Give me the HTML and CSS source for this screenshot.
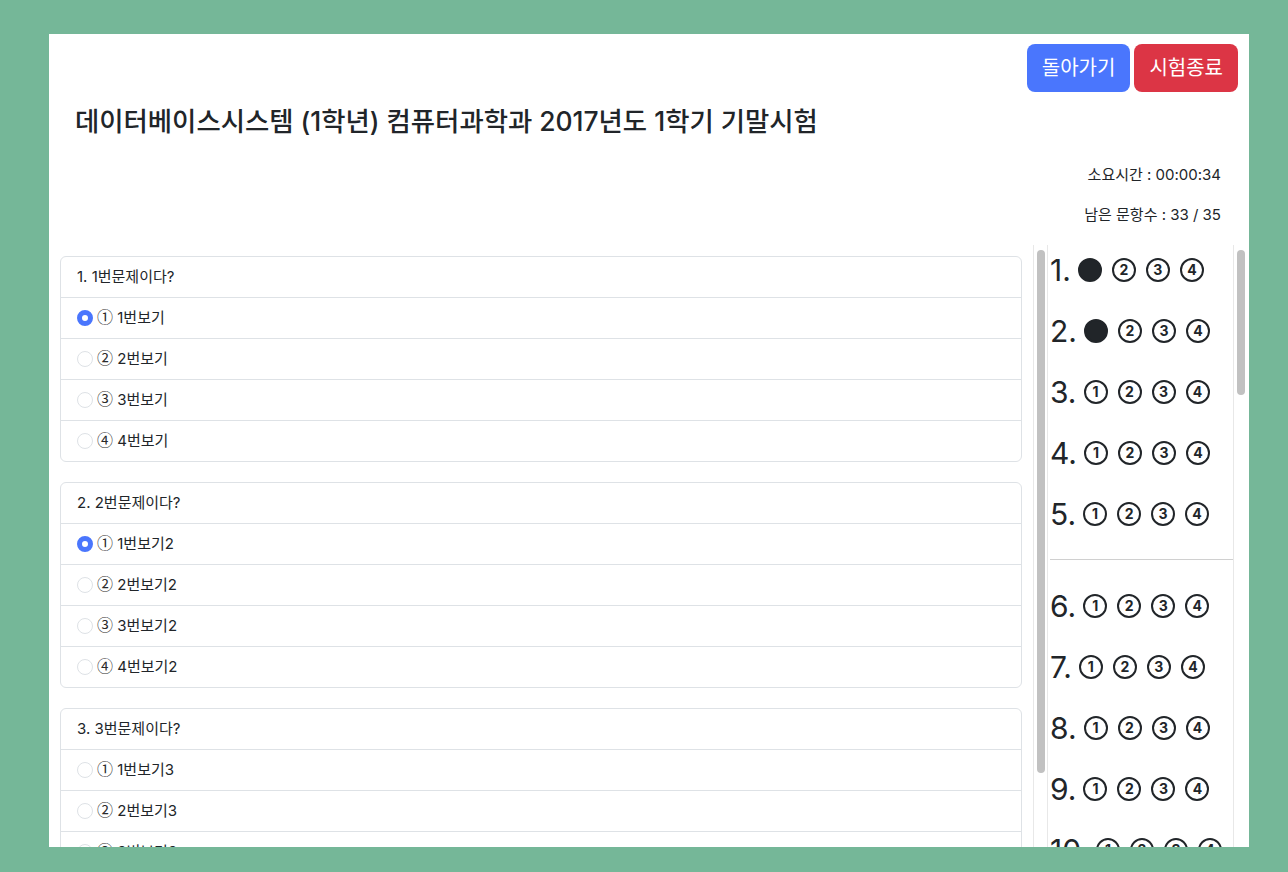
FILE: index.html
```html
<!DOCTYPE html>
<html lang="ko">
<head>
    <meta charset="UTF-8">
    <meta name="viewport" content="width=device-width, initial-scale=1.0">
    <title>시험 응시</title>
    <link rel="stylesheet" href="styles.css">
</head>
<body>
    <div class="sheet">
        <div class="top-actions">
            <button class="btn btn-back">돌아가기</button>
            <button class="btn btn-end">시험종료</button>
        </div>

        <h4 class="exam-title">데이터베이스시스템 (1학년) 컴퓨터과학과 2017년도 1학기 기말시험</h4>

        <div class="exam-status">
            <p>소요시간 : 00:00:34</p>
            <p>남은 문항수 : 33 / 35</p>
        </div>

        <div class="exam-body">
            <!-- 문제 목록 -->
            <div class="pane pane-questions">
                <div class="question-list" id="question-list"></div>
                <div class="scroll-track"><div class="scroll-thumb thumb-questions"></div></div>
            </div>
            <!-- OMR 답안지 -->
            <div class="pane pane-sheet">
                <div class="answer-sheet" id="answer-sheet"></div>
                <div class="scroll-track"><div class="scroll-thumb thumb-sheet"></div></div>
            </div>
        </div>
    </div>

    <script>
        const marks = ['①', '②', '③', '④'];
        const questions = [
            { no: 1, title: '1번문제이다?', suffix: '', checked: 0 },
            { no: 2, title: '2번문제이다?', suffix: '2', checked: 0 },
            { no: 3, title: '3번문제이다?', suffix: '3', checked: -1 }
        ];
        const answers = { 1: 0, 2: 0 };

        // 문제 카드
        const list = document.getElementById('question-list');
        questions.forEach(q => {
            const card = document.createElement('div');
            card.className = 'q-card';
            let html = `<div class="q-head">${q.no}. ${q.title}</div>`;
            marks.forEach((m, i) => {
                html += `
                    <label class="q-option">
                        <input type="radio" name="q${q.no}" ${q.checked === i ? 'checked' : ''}>
                        <span class="q-text"><span class="q-mark">${m}</span> ${i + 1}번보기${q.suffix}</span>
                    </label>`;
            });
            card.innerHTML = html;
            list.appendChild(card);
        });

        // 답안지 (35문항, 5문항마다 구분선)
        const sheet = document.getElementById('answer-sheet');
        let rows = '';
        for (let n = 1; n <= 35; n++) {
            let bubbles = '';
            for (let i = 0; i < 4; i++) {
                bubbles += answers[n] === i
                    ? '<span class="bubble filled"></span>'
                    : `<span class="bubble">${i + 1}</span>`;
            }
            rows += `<div class="omr-row"><span class="omr-no">${n}.</span>${bubbles}</div>`;
            if (n % 5 === 0 && n < 35) rows += '<hr class="omr-divider">';
        }
        sheet.innerHTML = rows;
    </script>
</body>
</html>
```

FILE: styles.css
```css
* { margin: 0; padding: 0; box-sizing: border-box; }
body {
    font-family: Inter, "Noto Sans CJK KR", sans-serif;
    font-size: 15px;
    line-height: 1.5;
    color: #212529;
    background-color: #75b798;
    height: 872px;
    overflow: hidden;
}

.sheet {
    width: 1200px;
    height: 813px;
    margin: 34px 0 0 49px;
    background: #fff;
    overflow: hidden;
}

/* 상단 버튼 */
.top-actions { display: flex; justify-content: flex-end; gap: 4px; padding: 10px 11px 0 0; }
.btn {
    font-family: inherit;
    font-size: 20px;
    line-height: 28px;
    padding: 9px 14px;
    border: 1px solid transparent;
    border-radius: 8px;
    color: #fff;
    cursor: pointer;
}
.btn-back { background-color: #4a76fd; }
.btn-end { background-color: #dc3545; }

.exam-title { margin: 13px 0 0 26px; font-size: 26.4px; line-height: 32px; font-weight: 500; }

.exam-status { margin-top: 26px; padding-right: 28px; text-align: right; }
.exam-status p { line-height: 24px; margin-bottom: 16px; }
.exam-status p:last-child { margin-bottom: 18px; }

/* 본문: 문제 + 답안지 */
.exam-body { display: flex; height: 602px; }
.pane { display: flex; height: 100%; }
.pane-questions { width: 999px; }
.pane-sheet { flex: 1; }

.question-list { flex: 1; overflow: hidden; padding: 11px; }
.q-card { border: 1px solid #dee2e6; border-radius: 6px; margin-bottom: 20px; }
.q-card:last-child { margin-bottom: 0; }
.q-head { padding: 8px 16px; line-height: 24px; border-bottom: 1px solid #dee2e6; }
.q-option { display: flex; align-items: center; gap: 4px; height: 41px; padding: 0 16px; border-bottom: 1px solid #dee2e6; }
.q-option:last-child { height: 40px; border-bottom: none; }
.q-option input {
    appearance: none;
    width: 16px;
    height: 16px;
    border: 1px solid #dee2e6;
    border-radius: 50%;
    background: #fff;
    flex-shrink: 0;
}
.q-option input:checked { border: 5px solid #4a76fd; }
.q-text { line-height: 24px; }
.q-mark { font-family: "Noto Sans CJK KR", sans-serif; font-size: 16px; line-height: 1; color: #2a2a2a; }

.answer-sheet { flex: 1; overflow: hidden; padding-top: 2px; }
.omr-row { display: flex; align-items: center; gap: 10px; height: 46px; margin-bottom: 15px; padding-left: 2px; white-space: nowrap; }
.omr-no { font-size: 30px; line-height: 46px; margin-right: -3px; }
.bubble {
    display: inline-flex;
    align-items: center;
    justify-content: center;
    width: 24px;
    height: 24px;
    border: 2px solid #212529;
    border-radius: 50%;
    font-size: 14px;
    font-weight: 700;
    line-height: 1;
    flex-shrink: 0;
}
.bubble.filled { background-color: #212529; }
.omr-divider { border: none; border-top: 1px solid #d0d0d0; margin: 22px 0 23px 2px; }

/* 스크롤바 */
.scroll-track { width: 15px; flex-shrink: 0; padding: 5px 0 0 3px; border-left: 1px solid #e8e8e8; }
.pane-questions .scroll-track { border-right: 1px solid #e8e8e8; }
.pane-sheet .scroll-track { width: 16px; }
.scroll-thumb { width: 8px; background-color: #c1c1c1; border-radius: 4px; }
.thumb-questions { height: 523px; }
.thumb-sheet { height: 145px; }
```
